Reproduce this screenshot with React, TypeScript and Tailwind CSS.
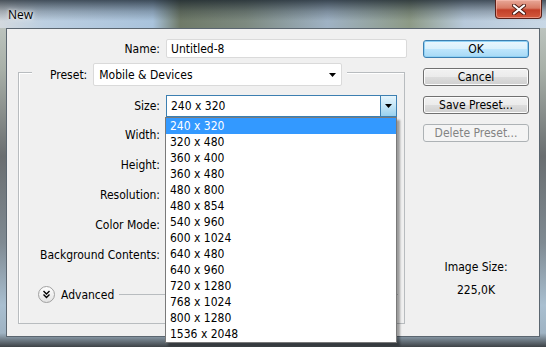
const sizes = [
  "240 x 320",
  "320 x 480",
  "360 x 400",
  "360 x 480",
  "480 x 800",
  "480 x 854",
  "540 x 960",
  "600 x 1024",
  "640 x 480",
  "640 x 960",
  "720 x 1280",
  "768 x 1024",
  "800 x 1280",
  "1536 x 2048",
];

const fieldLabels = ["Width:", "Height:", "Resolution:", "Color Mode:", "Background Contents:"];

const Caret = () => (
  <svg width="7" height="4" viewBox="0 0 7 4">
    <path d="M0 0h7L3.5 4z" fill="#000" />
  </svg>
);

const Button = ({ label, kind }: { label: string; kind?: "default" | "disabled" }) => {
  const base = "flex h-[18px] w-[106px] items-center justify-center rounded-[3px] border text-[12px] leading-none";
  if (kind === "default")
    return (
      <div className={`${base} border-[#3c7fb1] bg-[linear-gradient(180deg,#eaf6fd_0%,#d9f0fc_50%,#bee6fd_50%,#a7d9f5_100%)] text-black shadow-[inset_0_0_0_1px_#8fd1f5]`}>
        {label}
      </div>
    );
  if (kind === "disabled")
    return <div className={`${base} border-[#adb2b5] bg-[#f4f4f4] text-[#838383]`}>{label}</div>;
  return (
    <div className={`${base} border-[#707070] bg-[linear-gradient(180deg,#f2f2f2_0%,#ebebeb_50%,#dddddd_50%,#cfcfcf_100%)] text-black shadow-[inset_0_0_0_1px_#fcfcfc]`}>
      {label}
    </div>
  );
};

export default function App() {
  return (
    <div className="relative flex h-[347px] w-[546px] flex-col overflow-hidden bg-[linear-gradient(180deg,#c9d0cc_0%,#a8b0a8_20%,#6a6e70_45%,#7f8a92_70%,#a9bfd0_88%,#9fb3c3_96%,#3d4246_100%)] font-['DejaVu_Sans_Condensed','Liberation_Sans',sans-serif] text-[12px] text-black">
      {/* title bar */}
      <div className="flex h-[28px] items-start bg-[linear-gradient(180deg,rgba(15,25,35,0.7)_0%,rgba(15,25,35,0.25)_40%,rgba(255,255,255,0)_75%),linear-gradient(90deg,#d3d9de_0%,#bccfe1_8%,#a9c3dc_28%,#6f7a68_33%,#7d8a80_45%,#9fb2c4_60%,#8d9a86_75%,#b7c9da_85%,#c9d8e6_100%)]">
        <span className="pl-[8px] pt-[6px] font-['Open_Sans','Liberation_Sans',sans-serif] text-[12px] text-black [text-shadow:0_0_6px_#fff,0_0_3px_#fff]">
          New
        </span>
        <div className="ml-auto mr-[4px] flex h-[19px] w-[47px] items-center justify-center rounded-b-[4px] border border-t-0 border-[#5a2018] bg-[linear-gradient(180deg,#e8a898_0%,#d87a64_45%,#c23f28_55%,#d35a3e_100%)] shadow-[inset_0_0_0_1px_rgba(255,200,190,0.5)]">
          <svg width="14" height="11" viewBox="0 0 14 11">
            <path d="M2 1.5l10 8M12 1.5l-10 8" stroke="#4a1a12" strokeWidth="4" strokeLinecap="round" />
            <path d="M2 1.5l10 8M12 1.5l-10 8" stroke="#fff" strokeWidth="2.2" strokeLinecap="round" />
          </svg>
        </div>
      </div>

      {/* client */}
      <div className="flex px-[6px]">
        <div className="flex h-[309px] w-[534px] border border-[#5b6670] bg-[#f0f0f0]">
          {/* left column */}
          <div className="flex w-[400px] flex-col">
            <div className="mt-[10px] flex h-[19px] items-center">
              <span className="w-[153px] text-right">Name:</span>
              <div className="ml-[6px] flex h-[19px] w-[241px] items-center rounded-[2px] border border-[#dadada] bg-white pl-[4px]">
                Untitled-8
              </div>
            </div>

            <div className="ml-[11px] mt-[14px] flex h-[252px] w-[387px] flex-col border border-[#b8bcbf] shadow-[inset_1px_1px_0_#fff]">
              <div className="-mt-[10px] ml-[13px] flex h-[23px] items-center self-start bg-[#f0f0f0] pl-[18px] pr-[5px]">
                <span>Preset:</span>
                <div className="ml-[6px] flex h-[23px] w-[249px] items-center justify-between rounded-[2px] border border-[#dadada] bg-white pl-[5px] pr-[5px]">
                  <span>Mobile &amp; Devices</span>
                  <Caret />
                </div>
              </div>

              <div className="mt-[9px] flex h-[22px] items-center">
                <span className="w-[141px] text-right">Size:</span>
                <div className="ml-[6px] flex h-[22px] w-[231px] items-center border border-[#3c7fb1] bg-white">
                  <span className="flex-1 pl-[4px]">240 x 320</span>
                  <div className="flex h-full w-[16px] items-center justify-center border-l border-[#3c7fb1] bg-[linear-gradient(180deg,#e5f4fc_0%,#c4e5f6_50%,#98d1ef_100%)]">
                    <Caret />
                  </div>
                </div>
              </div>

              <div className="mt-[3px] flex flex-col">
                {fieldLabels.map((l) => (
                  <div key={l} className="flex h-[30px] items-center">
                    <span className="w-[141px] text-right">{l}</span>
                  </div>
                ))}
              </div>

              <div className="mt-[16px] flex h-[17px] items-center pl-[19px]">
                <svg width="17" height="17" viewBox="0 0 17 17">
                  <defs>
                    <linearGradient id="adv" x1="0" y1="0" x2="0" y2="1">
                      <stop offset="0" stopColor="#ffffff" />
                      <stop offset="1" stopColor="#e2e2e2" />
                    </linearGradient>
                  </defs>
                  <circle cx="8.5" cy="8.5" r="8" fill="url(#adv)" stroke="#a0a0a0" />
                  <path d="M5.5 5l3 3 3-3M5.5 8.5l3 3 3-3" fill="none" stroke="#000" strokeWidth="1.4" />
                </svg>
                <span className="ml-[6px]">Advanced</span>
                <div className="ml-[5px] mr-[6px] h-px flex-1 bg-[#b8bcbf]" />
              </div>
            </div>
          </div>

          {/* right column */}
          <div className="ml-[16px] flex w-[106px] flex-col">
            <div className="mt-[11px]">
              <Button label="OK" kind="default" />
            </div>
            <div className="mt-[10px]">
              <Button label="Cancel" />
            </div>
            <div className="mt-[10px]">
              <Button label="Save Preset..." />
            </div>
            <div className="mt-[10px]">
              <Button label="Delete Preset..." kind="disabled" />
            </div>
            <div className="mt-[117px] text-center leading-[16px]">Image Size:</div>
            <div className="mt-[7px] text-center leading-[16px]">225,0K</div>
          </div>
        </div>
      </div>

      {/* open size list */}
      <div className="absolute left-[165px] top-[117px] flex h-[226px] w-[232px] flex-col border border-[#7a7a7a] bg-white shadow-[3px_3px_2px_rgba(0,0,0,0.35)]">
        {sizes.map((s, i) => (
          <div
            key={s}
            className={`flex h-[16px] shrink-0 items-center pl-[4px] ${i === 0 ? "bg-[#3399ff] text-white" : "text-black"}`}
          >
            {s}
          </div>
        ))}
      </div>
    </div>
  );
}
